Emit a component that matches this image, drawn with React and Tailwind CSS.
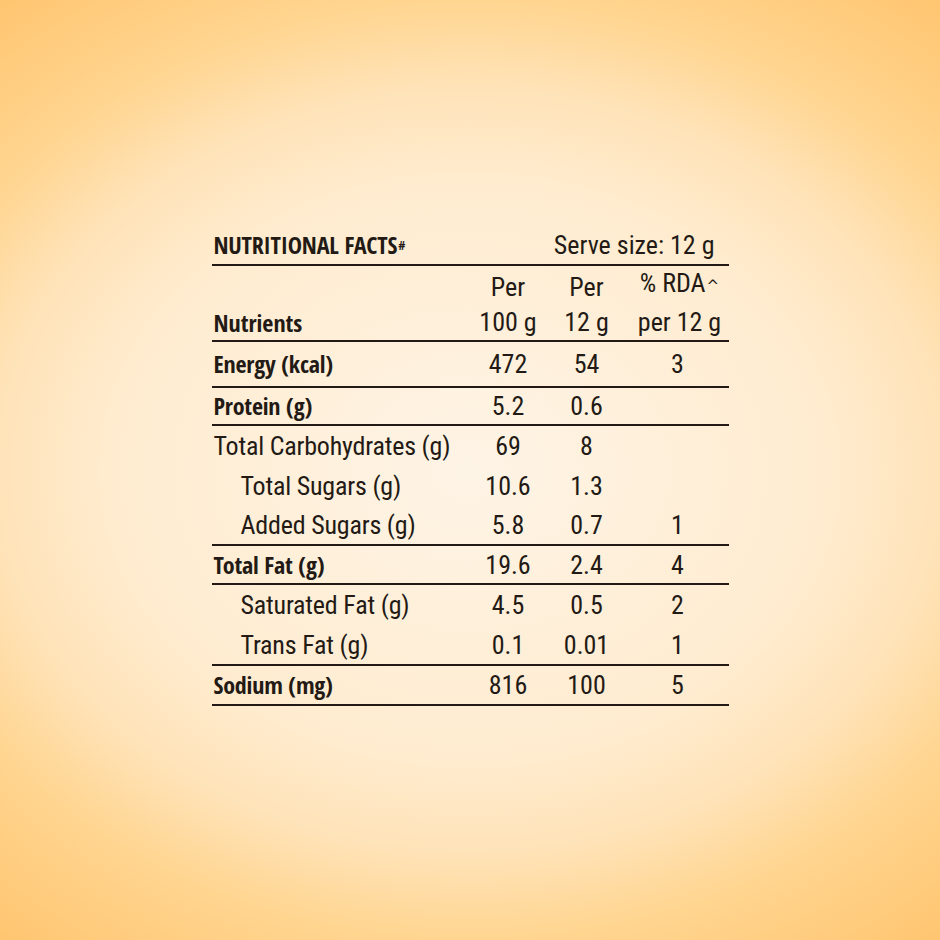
const ROWS = [
  { h: 'h-[44px]', items: [{ name: 'Energy (kcal)', bold: true, v: ['472', '54', '3'] }] },
  { h: 'h-[36px]', items: [{ name: 'Protein (g)', bold: true, v: ['5.2', '0.6', ''] }] },
  {
    items: [
      { name: 'Total Carbohydrates (g)', v: ['69', '8', ''], h: 'h-[40px]' },
      { name: 'Total Sugars (g)', sub: true, v: ['10.6', '1.3', ''], h: 'h-[40px]' },
      { name: 'Added Sugars (g)', sub: true, v: ['5.8', '0.7', '1'], h: 'h-[38px]' },
    ],
  },
  { h: 'h-[37px]', items: [{ name: 'Total Fat (g)', bold: true, v: ['19.6', '2.4', '4'] }] },
  {
    items: [
      { name: 'Saturated Fat (g)', sub: true, v: ['4.5', '0.5', '2'], h: 'h-[40px]' },
      { name: 'Trans Fat (g)', sub: true, v: ['0.1', '0.01', '1'], h: 'h-[39px]' },
    ],
  },
  { h: 'h-[38px]', items: [{ name: 'Sodium (mg)', bold: true, v: ['816', '100', '5'] }] },
];

const GRID = 'grid grid-cols-[258px_77px_80px_102px] items-center';
const REG = "font-['Roboto_Condensed',sans-serif] text-[26px]";
const BOLD = "font-['Open_Sans_Condensed',sans-serif] font-bold text-[24px]";

function Row({ item, h }) {
  return (
    <div className={`${GRID} ${item.h || h}`}>
      <div className={`${item.bold ? BOLD : REG} tracking-[-0.2px] ${item.sub ? 'pl-[29px]' : 'pl-[2px]'} leading-none`}>
        {item.name}
      </div>
      {item.v.map((v, i) => (
        <div key={i} className={`${REG} text-center leading-none`}>{v}</div>
      ))}
    </div>
  );
}

export default function App() {
  return (
    <div className="min-h-screen w-full flex justify-center bg-[radial-gradient(ellipse_610px_490px_at_50%_50%,#fef4e6_0%,#ffecd0_58%,#ffe3b8_78%,#ffd590_96%,#ffc46e_125%)] text-[#231a15]">
      <div className="w-[517px] pt-[226px]">
        {/* title */}
        <div className="h-[40px] flex items-center justify-between border-b-2 border-[#231a15]">
          <div className={`${BOLD} text-[22px] leading-none pl-[2px] tracking-[-0.2px]`}>
            NUTRITIONAL FACTS<sup className="text-[13px] relative -top-[4px] ml-[1px]">#</sup>
          </div>
          <div className={`${REG} text-[23px] leading-none pr-[14px]`}>Serve size: 12 g</div>
        </div>

        {/* header */}
        <div className={`${GRID} h-[76px] pb-[6px] border-b-2 border-[#231a15] items-end`}>
          <div className={`${BOLD} leading-[35px] pl-[2px]`}>Nutrients</div>
          <div className={`${REG} text-center leading-[35px]`}>
            Per<br />100 g
          </div>
          <div className={`${REG} text-center leading-[35px]`}>
            Per<br />12 g
          </div>
          <div className={`${REG} text-center leading-[35px] pl-[4px]`}>
            % RDA<span className="font-['DejaVu_Sans',sans-serif] text-[15px] relative -top-[1px] ml-[1px]">^</span>
            <br />per 12 g
          </div>
        </div>

        {ROWS.map((sec, i) => (
          <div key={i} className="border-b-2 border-[#231a15]">
            {sec.items.map((item, j) => (
              <Row key={j} item={item} h={sec.h} />
            ))}
          </div>
        ))}
      </div>
    </div>
  );
}
